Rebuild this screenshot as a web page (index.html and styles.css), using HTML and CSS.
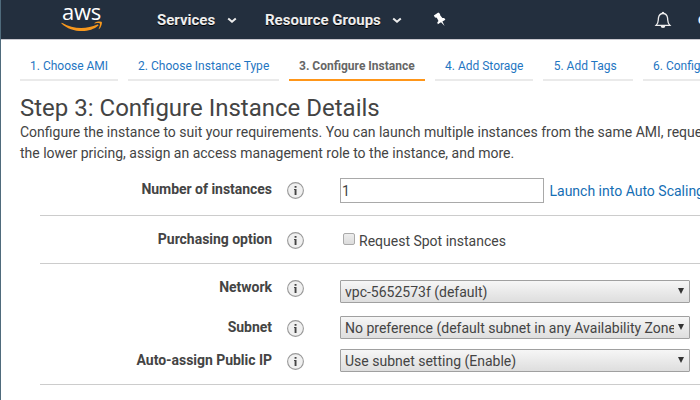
FILE: index.html
```html
<!DOCTYPE html>
<html lang="en">
<head>
<meta charset="utf-8">
<title>Configure Instance Details</title>
<link rel="stylesheet" href="styles.css">
</head>
<body>
<div class="window">
  <header class="topbar">
    <div class="logo">
      <span class="logo-text">aws</span>
      <svg class="smile" width="42" height="12" viewBox="0 0 42 12" aria-hidden="true">
        <path d="M0.2 2.2Q0.5 1.6 1.4 2.1C12 8.3 25.5 8.5 36.3 3.6Q38 3.2 37.4 4.5C29 12.2 11 12.5 0.2 2.2Z"/>
        <path d="M33.5 1.9C35.8 .1 40.3 .2 40.8 1C41.3 2 40.2 6.4 38.2 8.1Q37.4 8.4 37.8 7.4C38.8 4.9 39.3 3 38.8 2.4C38 1.8 35.8 2.1 34 2.4Q33 2.4 33.5 1.9Z"/>
      </svg>
    </div>
    <nav class="menu">
      <span class="menu-item services">Services</span>
      <svg class="chevron" width="10" height="7" viewBox="0 0 10 7"><path d="M1.2 1.5L5 4.8L8.8 1.5"/></svg>
      <span class="menu-item groups">Resource Groups</span>
      <svg class="chevron" width="10" height="7" viewBox="0 0 10 7"><path d="M1.2 1.5L5 4.8L8.8 1.5"/></svg>
      <svg class="pin" width="14" height="15" viewBox="0 0 14 15"><path d="M5.3.5L7.2 2.1L7 3.1L9.4 6.1L11.2 6L12.4 7.8L9.4 9.5L11.6 13.9L8 10.3L4.8 12.2L4.3 10.3L5.5 9L3.8 5.7L2 5.6L.8 3.6Z"/></svg>
    </nav>
    <svg class="bell" width="18" height="18" viewBox="0 0 18 18"><path class="outline" d="M2.2 14.3C4.8 11.8 4 9.8 4.5 6.7C5 3.8 6.8 2.5 9 2.5S13 3.8 13.5 6.7C14 9.8 13.2 11.8 15.8 14.3Z"/><path class="solid" d="M7.9 2.2V1.2Q9 .3 10.1 1.2V2.2ZM6.5 14.5H11.5Q11.2 17 9 17T6.5 14.5Z"/></svg>
    <span class="account">c</span>
  </header>
  <nav class="steps">
    <a class="step s1">1. Choose AMI</a>
    <a class="step s2">2. Choose Instance Type</a>
    <a class="step s3 active">3. Configure Instance</a>
    <a class="step s4">4. Add Storage</a>
    <a class="step s5">5. Add Tags</a>
    <a class="step s6">6. Configure Security Group</a>
  </nav>
  <main>
    <h1>Step 3: Configure Instance Details</h1>
    <p class="intro">Configure the instance to suit your requirements. You can launch multiple instances from the same AMI, request<br>the lower pricing, assign an access management role to the instance, and more.</p>
    <div class="form">
      <section class="group count">
        <div class="row">
          <label>Number of instances</label>
          <span class="info"><svg width="17" height="17" viewBox="0 0 17 17"><circle cx="8.5" cy="8.5" r="7.9"/><path d="M7.6 4H9.5V5.8H7.6ZM7 7H9.5V13H7.6V8H7Z"/></svg></span>
          <div class="control"><div class="input">1</div><a class="launch">Launch into Auto Scaling Group</a></div>
        </div>
      </section>
      <section class="group purchase">
        <div class="row">
          <label>Purchasing option</label>
          <span class="info"><svg width="17" height="17" viewBox="0 0 17 17"><circle cx="8.5" cy="8.5" r="7.9"/><path d="M7.6 4H9.5V5.8H7.6ZM7 7H9.5V13H7.6V8H7Z"/></svg></span>
          <div class="control"><span class="check"></span><span class="check-label">Request Spot instances</span></div>
        </div>
      </section>
      <section class="group network">
        <div class="row net">
          <label>Network</label>
          <span class="info"><svg width="17" height="17" viewBox="0 0 17 17"><circle cx="8.5" cy="8.5" r="7.9"/><path d="M7.6 4H9.5V5.8H7.6ZM7 7H9.5V13H7.6V8H7Z"/></svg></span>
          <div class="select"><span class="value">vpc-5652573f (default)</span><i class="arrow"></i></div>
        </div>
        <div class="row subnet">
          <label>Subnet</label>
          <span class="info"><svg width="17" height="17" viewBox="0 0 17 17"><circle cx="8.5" cy="8.5" r="7.9"/><path d="M7.6 4H9.5V5.8H7.6ZM7 7H9.5V13H7.6V8H7Z"/></svg></span>
          <div class="select"><span class="value">No preference (default subnet in any Availability Zone)</span><i class="arrow"></i></div>
        </div>
        <div class="row ip">
          <label>Auto-assign Public IP</label>
          <span class="info"><svg width="17" height="17" viewBox="0 0 17 17"><circle cx="8.5" cy="8.5" r="7.9"/><path d="M7.6 4H9.5V5.8H7.6ZM7 7H9.5V13H7.6V8H7Z"/></svg></span>
          <div class="select"><span class="value">Use subnet setting (Enable)</span><i class="arrow"></i></div>
        </div>
      </section>
    </div>
  </main>
</div>
</body>
</html>
```
FILE: styles.css
```css
* { box-sizing: border-box; }
body {
  margin: 0;
  width: 700px;
  height: 400px;
  overflow: hidden;
  background: #fff;
  color: #444;
  font: 14px/21px Roboto, sans-serif;
}
.window {
  width: 700px;
  height: 400px;
  overflow: hidden;
  border-left: 1px solid #4f6b7c;
}
.topbar {
  display: flex;
  height: 40px;
  background: #232f3e;
  border-bottom: 1px solid #c9c9cf;
  color: #fff;
  overflow: hidden;
}
.logo { width: 96px; padding-left: 60px; height: 39px; flex: none; }
.logo-text {
  display: block;
  height: 21px;
  padding-left: 1px;
  font: 500 22px/23px "Open Sans", sans-serif;
  letter-spacing: -0.3px;
}
.smile { display: block; fill: #f7981d; }
.menu { display: flex; width: 557px; flex: none; padding-left: 60px; }
.menu-item { font-weight: 700; font-size: 15px; line-height: 40px; color: #eee; text-shadow: 0 1px 0 #000; white-space: nowrap; }
.services { width: 70px; }
.groups { width: 127px; margin-left: 28px; }
.chevron { margin-top: 17px; flex: none; fill: none; stroke: #eee; stroke-width: 2; }
.pin { margin: 12px 0 0 31px; fill: #fff; flex: none; }
.bell { margin-top: 11px; flex: none; }
.outline { fill: none; stroke: #eee; stroke-width: 1.3; }
.solid { fill: #eee; }
.account { margin-left: 26px; font-weight: 700; line-height: 39px; color: #eee; }
.steps { display: flex; gap: 10px; height: 41px; padding: 11px 0 0 19px; }
.step {
  flex: none;
  height: 30px;
  padding-left: 10px;
  border-bottom: 2px solid #eaeaea;
  color: #1f76c2;
  font-size: 12px;
  line-height: 30px;
  white-space: nowrap;
}
.s1 { width: 98px; }
.s2 { width: 151px; letter-spacing: 0.03px; }
.s3 { width: 136px; }
.s4 { width: 98px; }
.s5 { width: 90px; padding-left: 10.7px; }
.s6 { width: 180px; }
.active { color: #666; font-weight: 700; border-color: #ff9619; }
main { height: 319px; }
h1 { margin: 0; height: 41px; padding: 12px 0 0 19px; font-size: 24px; line-height: 30px; font-weight: 400; }
.intro { margin: 0 0 0 19px; height: 43px; white-space: nowrap; }
.form { margin-left: 39px; }
.group { border-bottom: 1px solid #ccc; }
.count { height: 51px; padding-top: 13px; }
.purchase { height: 48px; padding-top: 12px; }
.network { height: 121px; padding-top: 12px; }
.row { display: grid; grid-template-columns: 232px 15px 17px 36px 1fr; align-items: start; }
label { grid-column: 1; padding-top: 1px; text-align: right; font-weight: 700; letter-spacing: -0.03px; white-space: nowrap; }
.info { grid-column: 3; height: 21px; padding-top: 4px; }
.info svg { display: block; }
.info circle { fill: #f0f0f0; stroke: #999; stroke-width: 1.1; }
.info path { fill: #444; }
.control { grid-column: 5; display: flex; white-space: nowrap; }
.input { width: 204px; height: 25px; border: 1px solid #a9a9a9; padding: 0 1px; line-height: 24px; flex: none; }
.launch { margin-left: 5.5px; line-height: 26px; color: #146eb4; }
.check {
  width: 12px; height: 12px; margin: 5px 4px 0 3px; flex: none;
  border: 1px solid #aaa; border-radius: 2px;
  background: linear-gradient(#ededed, #dcdcdc);
}
.check-label { line-height: 26px; }
.net { height: 40px; }
.net .select { margin-top: 4px; }
.subnet { height: 33px; }
.select {
  grid-column: 5;
  display: flex;
  align-items: center;
  width: 350px;
  height: 23px;
  padding: 0 5px 0 4px;
  border: 1px solid #a0a0a0;
  border-radius: 1px;
  background: linear-gradient(#f6f6f6, #dedede);
}
.value { flex: none; width: 329px; overflow: hidden; white-space: nowrap; line-height: 22px; padding-top: 1px; }
.arrow { flex: none; width: 6px; height: 6px; margin-left: 4px; margin-bottom: 1px; background: #333; clip-path: polygon(0 0, 100% 0, 50% 100%); }
```
